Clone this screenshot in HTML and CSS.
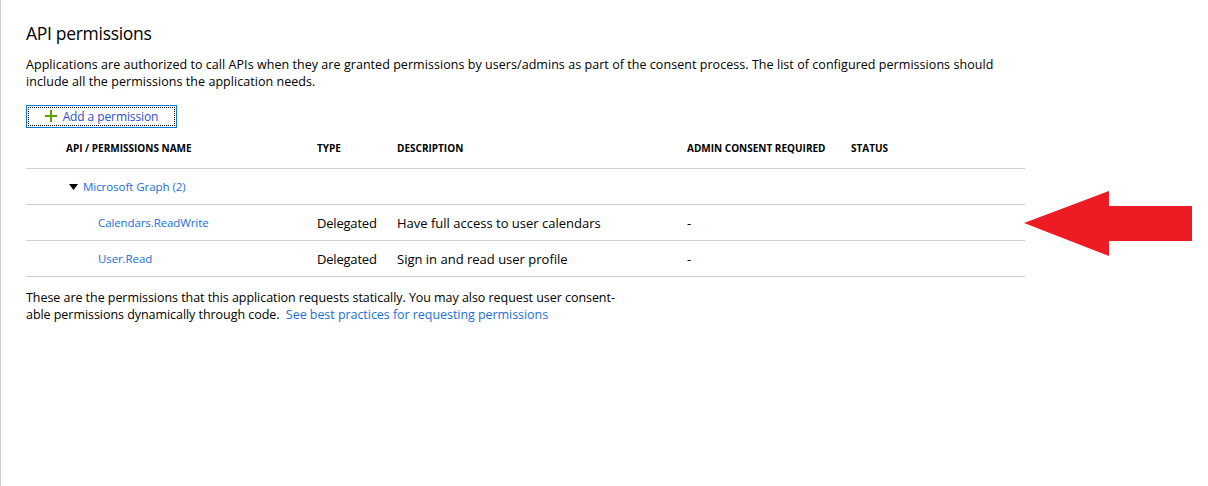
FILE: index.html
```html
<!DOCTYPE html>
<html>
<head>
<meta charset="utf-8">
<link rel="stylesheet" href="styles.css">
</head>
<body>
<div class="page">
  <h1 class="title">API permissions</h1>
  <p class="intro">Applications are authorized to call APIs when they are granted permissions by users/admins as part of the consent process. The list of configured permissions should include all the permissions the application needs.</p>
  <button class="add-btn"><span class="add-inner"><svg class="plus" width="12" height="12" viewBox="0 0 12 12"><path d="M6 0v12M0 6h12" stroke="#57a300" stroke-width="2"/></svg>Add a permission</span></button>
  <div class="table">
    <div class="row head">
      <div class="c name">API / PERMISSIONS NAME</div>
      <div class="c type">TYPE</div>
      <div class="c desc">DESCRIPTION</div>
      <div class="c admin">ADMIN CONSENT REQUIRED</div>
      <div class="c status">STATUS</div>
    </div>
    <div class="row group">
      <div class="c name"><svg class="caret" width="9" height="6" viewBox="0 0 9 6"><path d="M0 0h9L4.5 6z" fill="#000"/></svg><a class="link">Microsoft Graph (2)</a></div>
    </div>
    <div class="row item">
      <div class="c name"><a class="link">Calendars.ReadWrite</a></div>
      <div class="c type">Delegated</div>
      <div class="c desc">Have full access to user calendars</div>
      <div class="c admin">-</div>
      <div class="c status"></div>
    </div>
    <div class="row item">
      <div class="c name"><a class="link">User.Read</a></div>
      <div class="c type">Delegated</div>
      <div class="c desc">Sign in and read user profile</div>
      <div class="c admin">-</div>
      <div class="c status"></div>
    </div>
  </div>
  <p class="footer">These are the permissions that this application requests statically. You may also request user consent-<br>able permissions dynamically through code.&nbsp; <a class="link">See best practices for requesting permissions</a></p>
  <svg class="arrow" width="170" height="66" viewBox="0 0 170 66"><path d="M0 32 L85 0 L85 15 L168 15 L168 50 L85 50 L85 65 Z" fill="#ed1c24"/></svg>
</div>
</body>
</html>
```
FILE: styles.css
```css
html, body {
  margin: 0;
  padding: 0;
  background: #fff;
}
body {
  font-family: "Open Sans", "Noto Sans", sans-serif;
  color: #000;
  height: 486px;
  overflow: hidden;
}
.page {
  position: relative;
  border-left: 1px solid #cfcfcf;
  height: 486px;
  box-sizing: border-box;
  padding: 20px 0 0 25px;
}
.title {
  margin: 0;
  font-size: 17.5px;
  font-weight: 400;
  line-height: 26px;
  letter-spacing: -0.3px;
}
.intro {
  margin: 10px 0 0;
  width: 985px;
  font-size: 12.5px;
  line-height: 17px;
  letter-spacing: 0.05px;
}
.add-btn {
  margin-top: 15px;
  width: 151px;
  height: 23px;
  padding: 1px;
  border: 1px solid #0a7ad6;
  background: #fff;
  font-family: inherit;
  display: block;
  box-sizing: border-box;
}
.add-inner {
  display: flex;
  align-items: center;
  justify-content: center;
  gap: 6px;
  height: 100%;
  border: 1px dotted #000;
  box-sizing: border-box;
  color: #2b50d8;
  font-size: 12px;
  letter-spacing: -0.1px;
}
.plus { margin-top: -2px; }
.table {
  width: 999px;
}
.row {
  display: grid;
  grid-template-columns: 291px 80px 290px 164px 174px;
  align-items: center;
  border-bottom: 1px solid #d0d0d0;
  height: 36px;
  box-sizing: border-box;
}
.row.head {
  height: 41px;
  padding-bottom: 1px;
  font-size: 10px;
  font-weight: 700;
  letter-spacing: 0;
}
.head .name { padding-left: 40px; }
.group .name {
  padding-left: 43px;
  display: flex;
  align-items: center;
  gap: 5px;
  font-size: 11.6px;
}
.item { font-size: 13px; letter-spacing: 0; }
.item .type { letter-spacing: -0.2px; }
.item .name { padding-left: 72px; font-size: 11.5px; letter-spacing: -0.1px; }
.link { color: #1a6fe0; }
.group .link { letter-spacing: -0.1px; }
.footer {
  margin: 12px 0 0;
  font-size: 12.5px;
  line-height: 17px;
  letter-spacing: -0.05px;
}
.arrow {
  position: absolute;
  left: 1023px;
  top: 191px;
}
```
